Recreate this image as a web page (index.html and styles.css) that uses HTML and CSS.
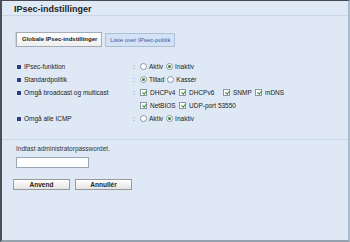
FILE: index.html
```html
<!DOCTYPE html>
<html>
<head>
<meta charset="utf-8">
<link rel="stylesheet" href="styles.css">
</head>
<body>
<div class="frame">
  <div class="header"><h1 class="title">IPsec-indstillinger</h1></div>
  <div class="tabs">
    <div class="tab active">Globale IPsec-indstillinger</div>
    <div class="tab">Liste over IPsec-politik</div>
  </div>
  <div class="settings">
    <div class="label"><span class="bullet"></span>IPsec-funktion</div>
    <div class="colon">:</div>
    <div class="value"><span class="radio"></span><span class="opt">Aktiv</span><span class="radio on"></span><span class="opt">Inaktiv</span></div>

    <div class="label"><span class="bullet"></span>Standardpolitik</div>
    <div class="colon">:</div>
    <div class="value"><span class="radio on"></span><span class="opt">Tillad</span><span class="radio"></span><span class="opt">Kassér</span></div>

    <div class="label"><span class="bullet"></span>Omgå broadcast og multicast</div>
    <div class="colon">:</div>
    <div class="value checks">
      <span class="ck w1"><span class="cb"></span>DHCPv4</span>
      <span class="ck w2"><span class="cb"></span>DHCPv6</span>
      <span class="ck w3"><span class="cb"></span>SNMP</span>
      <span class="ck"><span class="cb"></span>mDNS</span>
    </div>

    <div class="label"></div>
    <div class="colon"></div>
    <div class="value checks">
      <span class="ck w1"><span class="cb"></span>NetBIOS</span>
      <span class="ck"><span class="cb"></span>UDP-port 53550</span>
    </div>

    <div class="label"><span class="bullet"></span>Omgå alle ICMP</div>
    <div class="colon">:</div>
    <div class="value"><span class="radio"></span><span class="opt">Aktiv</span><span class="radio on"></span><span class="opt">Inaktiv</span></div>
  </div>
  <div class="password">
    <div class="pw-label">Indtast administratorpasswordet.</div>
    <div class="pw-input"></div>
  </div>
  <div class="buttons">
    <div class="btn">Anvend</div>
    <div class="btn">Annullér</div>
  </div>
</div>
</body>
</html>
```
FILE: styles.css
```css
html, body {
  margin: 0;
  padding: 0;
}
body {
  font-family: "Liberation Sans", Arial, sans-serif;
  color: #222;
}
.frame {
  width: 350px;
  height: 242px;
  box-sizing: border-box;
  background: #dfe9f5;
  border-top: 1px solid #464b55;
  border-left: 2px solid #4a4f58;
  border-right: 2px solid #acbbcc;
  border-bottom: 2px solid #95a1ad;
}
.header {
  padding: 3px 0 0 12px;
  border-bottom: 1px solid #cad6e3;
}
.title {
  margin: 0;
  font-size: 9px;
  line-height: 11px;
  font-weight: bold;
  color: #1e1e1e;
}
.tabs {
  display: flex;
  align-items: flex-end;
  margin-top: 16px;
  padding-left: 14px;
  height: 15px;
}
.tab {
  font-size: 6px;
  line-height: 12px;
  padding: 0 4px;
  border: 1px solid #aebfd4;
  background: #d3e2f4;
  color: #3a58a8;
  margin-left: 3px;
}
.tab.active {
  margin-left: 0;
  line-height: 13px;
  font-weight: bold;
  color: #222;
  background: linear-gradient(#ffffff, #eeeeee);
  border-color: #a3abb4;
  box-shadow: -1px 0 0 #c8d0d8;
  padding: 0 4px 0 5px;
}
.settings {
  display: grid;
  grid-template-columns: 116px 7px 1fr;
  grid-auto-rows: 13px;
  margin-top: 13px;
  padding-left: 15px;
  font-size: 6.5px;
  line-height: 13px;
}
.label {
  display: flex;
  align-items: center;
  white-space: nowrap;
}
.bullet {
  width: 4px;
  height: 4px;
  background: #2d3d86;
  margin-right: 3px;
}
.colon {
  color: #666;
}
.value {
  display: flex;
  align-items: center;
}
.radio {
  width: 5px;
  height: 5px;
  border: 1px solid #8a96a2;
  border-radius: 50%;
  background: #fff;
  margin-right: 2px;
  position: relative;
}
.radio.on::after {
  content: "";
  position: absolute;
  left: 1px;
  top: 1px;
  width: 3px;
  height: 3px;
  border-radius: 50%;
  background: #3e7f3a;
}
.opt {
  margin-right: 3px;
}
.ck {
  display: flex;
  align-items: center;
  white-space: nowrap;
}
.w1 { width: 39px; }
.w2 { width: 44px; }
.w3 { width: 32px; }
.cb {
  width: 5px;
  height: 5px;
  border: 1px solid #8a96a2;
  background: #fff;
  margin-right: 3px;
  position: relative;
}
.cb::after {
  content: "";
  position: absolute;
  left: 1.5px;
  top: 0px;
  width: 1.5px;
  height: 3px;
  border-right: 1px solid #2f8a2f;
  border-bottom: 1px solid #2f8a2f;
  transform: rotate(40deg);
}
.password {
  margin-top: 14px;
  border-top: 1px solid #cad6e3;
  padding: 4px 0 0 14px;
  font-size: 6.5px;
}
.pw-label {
  line-height: 9px;
  color: #333;
}
.pw-input {
  margin-top: 4px;
  width: 71px;
  height: 9px;
  background: #fff;
  border: 1px solid #9aa6b2;
}
.buttons {
  display: flex;
  gap: 5px;
  margin-top: 11px;
  padding-left: 11px;
}
.btn {
  width: 55px;
  height: 9px;
  line-height: 9px;
  text-align: center;
  font-size: 6.5px;
  font-weight: bold;
  color: #222;
  background: linear-gradient(#ffffff, #e4e4e4);
  border: 1px solid #9a9a9a;
}
```
